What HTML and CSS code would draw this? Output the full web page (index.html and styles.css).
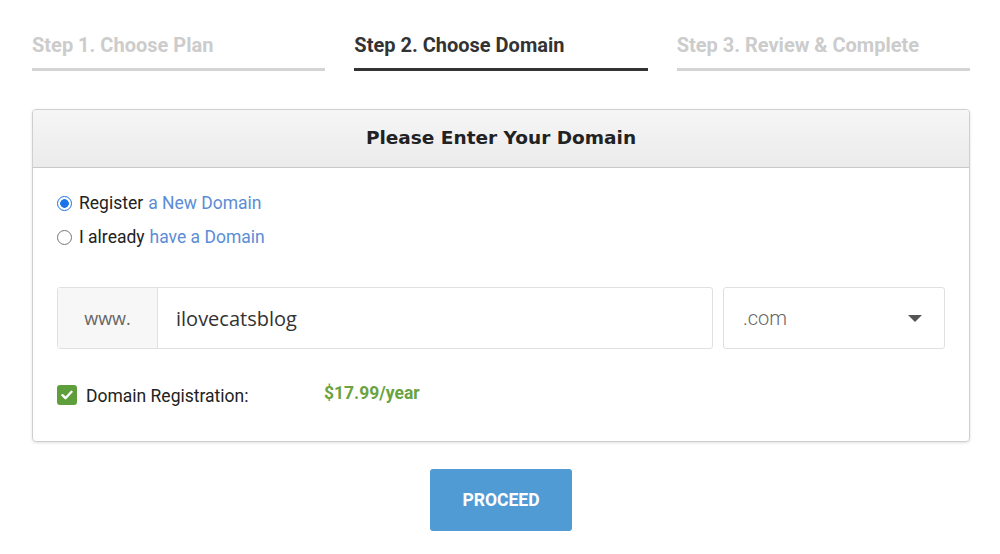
FILE: index.html
```html
<!DOCTYPE html>
<html lang="en">
<head>
  <meta charset="UTF-8">
  <title>Choose Domain</title>
  <meta name="viewport" content="width=device-width, initial-scale=1.0"/>
  <link rel="stylesheet" href="styles.css">
</head>
<body>
  <div class="page">
    <div class="steps">
      <div class="step">Step 1. Choose Plan</div>
      <div class="step active">Step 2. Choose Domain</div>
      <div class="step">Step 3. Review &amp; Complete</div>
    </div>

    <div class="card">
      <div class="card-head">Please Enter Your Domain</div>
      <div class="card-body">
        <label class="radio"><span class="dot checked"></span>Register <span class="link">a New Domain</span></label>
        <label class="radio"><span class="dot"></span>I already <span class="link">have a Domain</span></label>

        <div class="domain-row">
          <div class="input-group">
            <span class="addon">www.</span>
            <span class="field">ilovecatsblog</span>
          </div>
          <div class="select">
            <span>.com</span>
            <span class="caret"></span>
          </div>
        </div>

        <div class="reg">
          <span class="check">
            <svg width="12" height="10" viewBox="0 0 12 10"><path d="M1.5 5.2l3 3 6-6.4" fill="none" stroke="#fff" stroke-width="2.4" stroke-linecap="round" stroke-linejoin="round"/></svg>
          </span>
          <span class="reg-label">Domain Registration:</span>
          <span class="price">$17.99/year</span>
        </div>
      </div>
    </div>

    <div class="actions">
      <button type="button">PROCEED</button>
    </div>
  </div>
</body>
</html>
```

FILE: styles.css
```css
body {
  margin: 0;
  font-family: Roboto, 'Liberation Sans', sans-serif;
  background: #fff;
  color: #333;
}
.page {
  width: 938px;
  margin-left: 32px;
}
.steps {
  display: grid;
  grid-template-columns: repeat(3, 1fr);
  gap: 29px;
  padding-top: 33px;
}
.step {
  font-size: 20px;
  font-weight: 700;
  line-height: 24px;
  color: #ccc;
  padding-bottom: 11px;
  border-bottom: 3px solid #d4d4d4;
}
.step.active {
  color: #333;
  border-bottom-color: #333;
}
.card {
  margin-top: 38px;
  border: 1px solid #cfcfcf;
  border-radius: 4px;
  box-shadow: 0 1px 3px rgba(0,0,0,0.12);
}
.card-head {
  height: 57px;
  line-height: 56px;
  text-align: center;
  font-family: 'DejaVu Sans', sans-serif;
  font-weight: 700;
  font-size: 18.5px;
  color: #222;
  background: linear-gradient(#f6f6f6, #ebebeb);
  border-bottom: 1px solid #c9c9c9;
  border-radius: 4px 4px 0 0;
}
.card-body {
  padding: 18px 24px 36px;
}
.radio {
  display: flex;
  align-items: center;
  font-size: 17.5px;
  height: 34px;
  color: #222;
}
.link {
  color: #5b8dd6;
  margin-left: 5px;
}
.dot {
  width: 15px;
  height: 15px;
  border: 1px solid #767676;
  border-radius: 50%;
  margin-right: 7px;
  box-sizing: border-box;
}
.dot.checked {
  border: 1px solid #1a73e8;
  background: radial-gradient(circle, #1a73e8 0 4px, #fff 4.6px);
}
.domain-row {
  display: flex;
  gap: 10px;
  margin-top: 33px;
}
.input-group {
  flex: 0 0 656px;
  display: flex;
  height: 62px;
  border: 1px solid #e0e0e0;
  border-radius: 3px;
  box-sizing: border-box;
}
.addon {
  width: 99px;
  background: #f7f7f7;
  border-right: 1px solid #e0e0e0;
  display: flex;
  align-items: center;
  justify-content: center;
  font-family: 'Open Sans', sans-serif;
  font-size: 18px;
  color: #666;
}
.field {
  display: flex;
  align-items: center;
  padding-left: 18px;
  font-family: 'Open Sans', sans-serif;
  font-size: 20px;
  color: #333;
}
.select {
  flex: 0 0 222px;
  height: 62px;
  box-sizing: border-box;
  border: 1px solid #e0e0e0;
  border-radius: 3px;
  display: flex;
  align-items: center;
  justify-content: space-between;
  padding: 0 22px 0 19px;
  font-size: 20px;
  font-weight: 300;
  color: #666;
}
.caret {
  width: 0;
  height: 0;
  border-left: 7px solid transparent;
  border-right: 7px solid transparent;
  border-top: 7px solid #555;
}
.reg {
  display: flex;
  align-items: center;
  height: 20px;
  margin-top: 36px;
}
.check {
  width: 20px;
  height: 20px;
  background: #5e9e3b;
  border-radius: 3px;
  display: flex;
  align-items: center;
  justify-content: center;
  margin-right: 9px;
}
.reg-label {
  font-size: 17.5px;
  color: #222;
  width: 238px;
  margin-top: 2px;
}
.price {
  font-size: 17.5px;
  font-weight: 700;
  color: #6aa33f;
  margin-top: -4px;
}
.actions {
  display: flex;
  justify-content: center;
  margin-top: 27px;
}
button {
  width: 142px;
  height: 62px;
  background: #519bd5;
  color: #fff;
  border: none;
  border-radius: 3px;
  font-family: Roboto, sans-serif;
  font-weight: 700;
  font-size: 17.5px;
}
```
